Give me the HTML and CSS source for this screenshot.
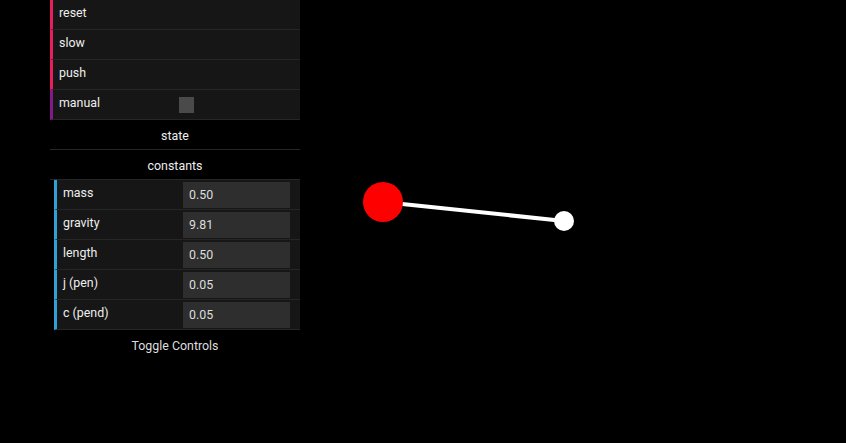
FILE: index.html
```html
<!DOCTYPE html>
<html>
<head>
<meta charset="utf-8">
<link rel="stylesheet" href="styles.css">
</head>
<body>
<svg class="scene" width="846" height="443" viewBox="0 0 846 443">
  <line x1="383" y1="202" x2="564" y2="221" stroke="#fff" stroke-width="4"/>
  <circle cx="383" cy="202" r="20" fill="#ff0000"/>
  <circle cx="564" cy="221" r="10" fill="#fff"/>
</svg>
<div class="gui">
  <div class="row fn"><span class="label">reset</span></div>
  <div class="row fn"><span class="label">slow</span></div>
  <div class="row fn"><span class="label">push</span></div>
  <div class="row bool"><span class="label">manual</span><span class="check"></span></div>
  <div class="title">state</div>
  <div class="title">constants</div>
  <div class="folder">
    <div class="row num"><span class="label">mass</span><span class="input">0.50</span></div>
    <div class="row num"><span class="label">gravity</span><span class="input">9.81</span></div>
    <div class="row num"><span class="label">length</span><span class="input">0.50</span></div>
    <div class="row num"><span class="label">j (pen)</span><span class="input">0.05</span></div>
    <div class="row num"><span class="label">c (pend)</span><span class="input">0.05</span></div>
  </div>
  <div class="toggle">Toggle Controls</div>
</div>
</body>
</html>
```
FILE: styles.css
```css
html, body {
  margin: 0;
  padding: 0;
  background: #000;
  width: 846px;
  height: 443px;
  overflow: hidden;
}
.scene {
  position: absolute;
  left: 0;
  top: 0;
}
.gui {
  position: relative;
  margin-left: 50px;
  width: 250px;
  font-family: Roboto, "Liberation Sans", sans-serif;
  font-size: 12.4px;
  color: #eee;
}
.row {
  display: flex;
  align-items: flex-start;
  height: 29px;
  background: #161616;
  border-bottom: 1px solid #262626;
  border-left: 3px solid #e61d5f;
  box-sizing: content-box;
}
.row.bool { border-left-color: #85188a; }
.row.num { border-left-color: #2fa1d6; }
.label {
  width: 120px;
  padding-left: 6px;
  line-height: 25px;
  flex: none;
}
.check {
  margin-top: 7px;
  width: 15px;
  height: 16px;
  background: #4a4a4a;
}
.input {
  margin-top: 2px;
  width: 101px;
  height: 26px;
  padding-left: 6px;
  line-height: 26px;
  background: #2e2e2e;
  color: #ddd;
}
.title {
  height: 29px;
  line-height: 31px;
  text-align: center;
  background: #000;
  border-bottom: 1px solid #262626;
}
.folder {
  padding-left: 4px;
}
.toggle {
  height: 30px;
  line-height: 31px;
  text-align: center;
  color: #ddd;
}
```
